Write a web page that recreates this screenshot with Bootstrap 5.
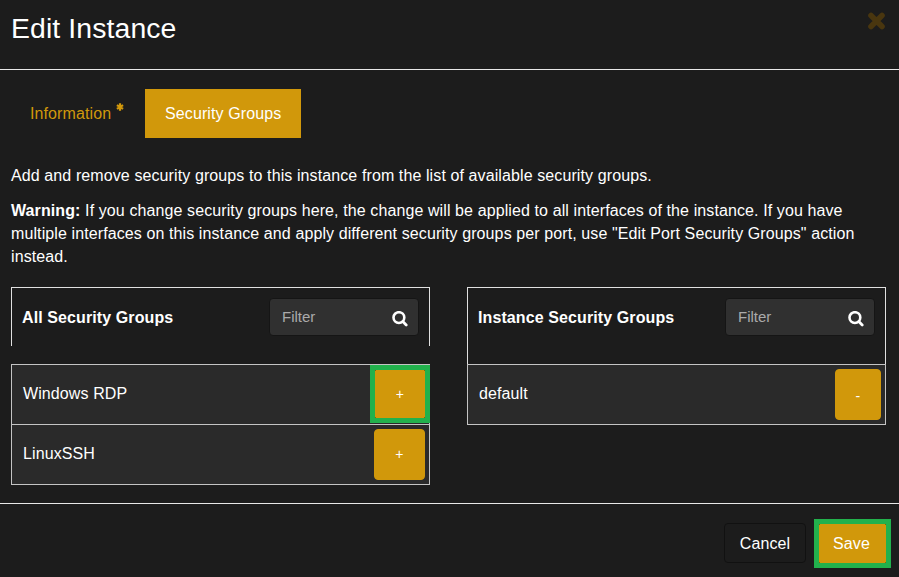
<!DOCTYPE html>
<html lang="en">
<head>
<meta charset="utf-8">
<meta name="viewport" content="width=device-width, initial-scale=1">
<title>Edit Instance</title>
<link href="https://cdn.jsdelivr.net/npm/bootstrap@5.3.0/dist/css/bootstrap.min.css" rel="stylesheet">
<style>
:root { --gold: #d1980b; --ink: #1c1c1c; --row: #2a2a2a; --mark: #22b14c; }
body { background: var(--ink); color: #fff; font: 16px/23px "Liberation Sans", Arial, sans-serif; letter-spacing: .103px; overflow: hidden; }
.dialog { height: 577px; }
.dialog-head { height: 70px; border-bottom: 1px solid #e8e8e8; padding: 12px 13px 0 11px; }
.dialog-head h1 { font-size: 28.4px; line-height: 32px; font-weight: 400; }
.close-x { width: 19px; height: 19px; margin: 0; }
.dialog-body { padding: 19px 13px 0 11px; height: 433px; }
.nav-tabs-flat .nav-link { --bs-nav-pills-border-radius: 0; height: 49px; padding: 13px 20px; color: var(--gold); line-height: 23px; }
.nav-tabs-flat .nav-link.active { background: var(--gold); color: #fff; width: 156px; white-space: nowrap; }
.tab-info { width: 134px; padding-left: 19px !important; padding-right: 0 !important; }
.req { width: 8px; height: 8px; margin: 1px 0 0 5px; }
.intro { margin: 26px 0 0; }
.intro p { margin: 0 -10px 12px 0; }
.panels { gap: 37px; margin-top: 19px; }
.group-panel { width: 419px; }
.group-head { height: 59px; border: 1px solid #e0e0e0; border-bottom: 0; padding: 10px 10px 0; }
.group-head.tall { height: 77px; }
.group-head h2 { font-size: 16px; line-height: 23px; font-weight: 700; padding-top: 8px; }
.filter { width: 150px; height: 38px; background: #303030; border: 1px solid #151515; border-radius: 4px; padding: 0 10px 0 12px; }
.filter input { background: none; border: 0; padding: 0 0 1px; color: #aaa; font-size: 15px; width: 90px; outline: 0; }
.filter input::placeholder { color: #aaa; opacity: 1; }
.filter svg { width: 16px; height: 16px; margin-top: 3px; }
.gap-row { margin-top: 18px; }
.group-list { border: 1px solid #c4c4c4; }
.group-row { background: var(--row); height: 59px; padding: 0 4px 0 11px; }
.group-row > span { padding-bottom: 2px; }
.group-row + .group-row { border-top: 1px solid #c4c4c4; height: 60px; }
.btn { letter-spacing: inherit; }
.btn-gold { --bs-btn-color: #fff; --bs-btn-bg: var(--gold); --bs-btn-border-color: var(--gold); --bs-btn-hover-bg: #b98609; --bs-btn-hover-color: #fff; --bs-btn-border-radius: 4px; font-size: 14px; }
.btn-move { width: 51px; height: 51px; padding: 0; }
.btn-move.minus { width: 46px; padding-top: 3px; }
.marked { border: 5px solid var(--mark); background: #111; display: flex; }
.marked .btn-gold { --bs-btn-border-radius: 1px; }
.mark-add { width: 60px; height: 58px; margin: 0 -5px 1px 0; position: relative; }
.mark-add .btn { width: 50px; height: 48px; padding-top: 1px; }
.dialog-foot { height: 74px; border-top: 1px solid #e8e8e8; padding: 15px 8px 0 0; gap: 8px; }
.btn-quiet { --bs-btn-color: #fff; --bs-btn-border-color: #111; --bs-btn-hover-color: #fff; --bs-btn-hover-bg: #2a2a2a; --bs-btn-border-radius: 4px; width: 82px; height: 40px; margin-top: 4px; padding: 1px 0 0; }
.mark-save { width: 77px; height: 49px; }
.mark-save .btn { width: 67px; height: 39px; padding: 0 2px 0 0; font-size: 16px; }
</style>
<script src="https://cdn.jsdelivr.net/npm/bootstrap@5.3.0/dist/js/bootstrap.bundle.min.js"></script>
</head>
<body>
<svg class="d-none">
  <symbol id="search" viewBox="0 0 16 16"><circle cx="6.9" cy="6.6" r="5.4" fill="none" stroke="#fff" stroke-width="2.6"/><path d="M10.8 10.6L14.2 14" stroke="#fff" stroke-width="2.8" stroke-linecap="round"/></symbol>
</svg>
<main class="dialog d-flex flex-column">
  <header class="dialog-head d-flex justify-content-between align-items-start">
    <h1 class="m-0">Edit Instance</h1>
    <svg class="close-x" viewBox="0 0 19 19" role="button" aria-label="Close"><path d="M4 3.5L15 14.5M15 3.5L4 14.5" stroke="#49360f" stroke-width="5.6" stroke-linecap="round"/></svg>
  </header>
  <section class="dialog-body">
    <ul class="nav nav-pills nav-tabs-flat">
      <li class="nav-item"><a class="nav-link tab-info d-flex" href="#">Information<svg class="req" viewBox="0 0 8 8"><path d="M4 0.3V7.7M0.9 2.1L7.1 5.9M7.1 2.1L0.9 5.9" stroke="#d1980b" stroke-width="2.2"/></svg></a></li>
      <li class="nav-item"><a class="nav-link active" href="#">Security Groups</a></li>
    </ul>
    <div class="intro">
      <p>Add and remove security groups to this instance from the list of available security groups.</p>
      <p><strong>Warning:</strong> If you change security groups here, the change will be applied to all interfaces of the instance. If you have multiple interfaces on this instance and apply different security groups per port, use "Edit Port Security Groups" action instead.</p>
    </div>
    <div class="panels d-flex align-items-start">
      <div class="group-panel">
        <div class="group-head d-flex justify-content-between align-items-start">
          <h2 class="m-0">All Security Groups</h2>
          <div class="filter d-flex align-items-center justify-content-between"><input type="text" placeholder="Filter"><svg><use href="#search"/></svg></div>
        </div>
        <div class="group-list gap-row">
          <div class="group-row d-flex align-items-center justify-content-between"><span>Windows RDP</span><div class="marked mark-add"><button class="btn btn-gold btn-move">+</button></div></div>
          <div class="group-row d-flex align-items-center justify-content-between"><span>LinuxSSH</span><button class="btn btn-gold btn-move">+</button></div>
        </div>
      </div>
      <div class="group-panel">
        <div class="group-head tall d-flex justify-content-between align-items-start">
          <h2 class="m-0">Instance Security Groups</h2>
          <div class="filter d-flex align-items-center justify-content-between"><input type="text" placeholder="Filter"><svg><use href="#search"/></svg></div>
        </div>
        <div class="group-list">
          <div class="group-row d-flex align-items-center justify-content-between"><span>default</span><button class="btn btn-gold btn-move minus">-</button></div>
        </div>
      </div>
    </div>
  </section>
  <footer class="dialog-foot d-flex justify-content-end align-items-start">
    <button class="btn btn-quiet">Cancel</button>
    <div class="marked mark-save"><button class="btn btn-gold">Save</button></div>
  </footer>
</main>
</body>
</html>
